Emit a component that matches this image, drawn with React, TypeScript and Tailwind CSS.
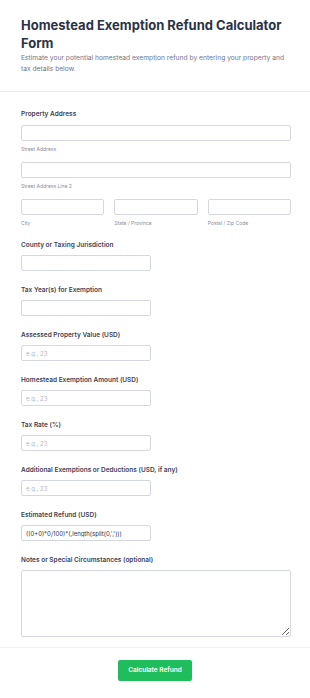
import React from "react";

const font = { fontFamily: "Inter, 'Liberation Sans', sans-serif" };

function Label({ children }: { children: React.ReactNode }) {
  return (
    <label className="block text-[6.5px] leading-[9px] font-semibold text-[#3f4254] mb-[5px]">
      {children}
    </label>
  );
}

function Sub({ children }: { children: React.ReactNode }) {
  return <div className="text-[5px] leading-[7px] text-[#8a8f9c] mt-[5px]">{children}</div>;
}

function Input({ w = "w-full", placeholder, value }: { w?: string; placeholder?: string; value?: string }) {
  return (
    <input
      readOnly
      className={`${w} h-[16px] block border border-[#d5d8de] rounded-[2px] bg-white px-[4px] text-[6px] text-[#2c3345] placeholder:text-[#b3b7c0] outline-none`}
      placeholder={placeholder}
      value={value ?? ""}
    />
  );
}

function Field({ label, placeholder, value, first }: { label: string; placeholder?: string; value?: string; first?: boolean }) {
  return (
    <div className={first ? "" : "mt-[15px]"}>
      <Label>{label}</Label>
      <Input w="w-[130px]" placeholder={placeholder} value={value} />
    </div>
  );
}

export default function App() {
  return (
    <div className="w-[310px] min-h-[698px] bg-white" style={font}>
      <div className="pl-[21px] pr-[19px] pt-[16px] pb-[16px] border-b border-[#e6e8ec]">
        <h1 className="text-[13px] leading-[18px] font-bold text-[#2c3345]">
          Homestead Exemption Refund Calculator Form
        </h1>
        <p className="mt-[1px] text-[6.7px] leading-[11px] text-[#6f7689]">
          Estimate your potential homestead exemption refund by entering your property and tax details below.
        </p>
      </div>
      <div className="pl-[21px] pr-[19px] pt-[18px] pb-[10px] border-b border-[#eef0f3]">
        <div>
          <label className="block text-[6.5px] leading-[9px] font-semibold text-[#3f4254] mb-[5.5px]">
            Property Address
          </label>
          <Input />
          <Sub>Street Address</Sub>
          <div className="mt-[9px]">
            <Input />
          </div>
          <Sub>Street Address Line 2</Sub>
          <div className="mt-[9px] grid grid-cols-3 gap-x-[10px]">
            <div>
              <Input />
              <Sub>City</Sub>
            </div>
            <div>
              <Input />
              <Sub>State / Province</Sub>
            </div>
            <div>
              <Input />
              <Sub>Postal / Zip Code</Sub>
            </div>
          </div>
        </div>
        <div className="mt-[14.5px]">
          <Field first label="County or Taxing Jurisdiction" />
          <Field label="Tax Year(s) for Exemption" />
          <Field label="Assessed Property Value (USD)" placeholder="e.g., 23" />
          <Field label="Homestead Exemption Amount (USD)" placeholder="e.g., 23" />
          <Field label="Tax Rate (%)" placeholder="e.g., 23" />
          <Field label="Additional Exemptions or Deductions (USD, if any)" placeholder="e.g., 23" />
          <Field label="Estimated Refund (USD)" value="((0+0)*0/100)*(,length(split(0,',')))" />
          <div className="mt-[15px]">
            <Label>Notes or Special Circumstances (optional)</Label>
            <textarea
              readOnly
              className="block w-full h-[67px] border border-[#d5d8de] rounded-[2px] bg-white outline-none text-[6px]"
            />
          </div>
        </div>
      </div>
      <div className="flex justify-center pt-[12px] pb-[17px]">
        <button className="w-[74px] h-[21px] rounded-[2px] bg-[#1fbd5c] text-white text-[6.5px] font-semibold">
          Calculate Refund
        </button>
      </div>
    </div>
  );
}
